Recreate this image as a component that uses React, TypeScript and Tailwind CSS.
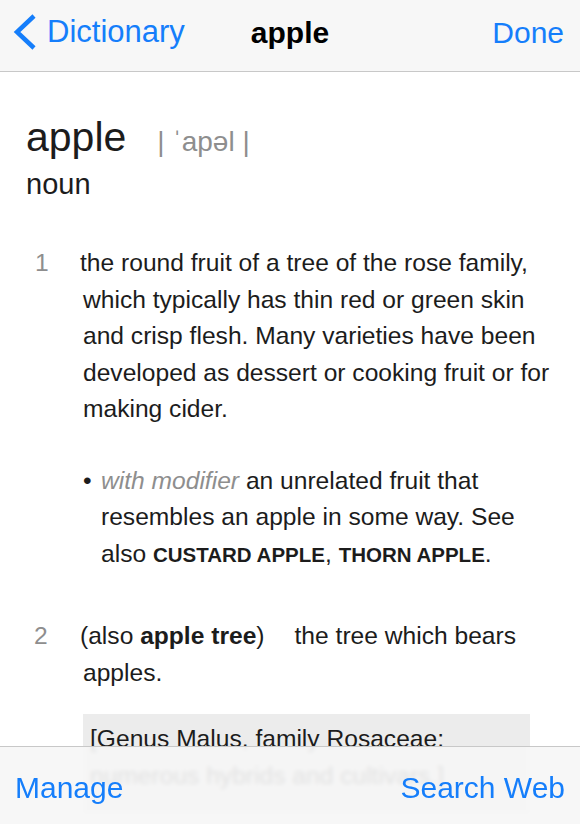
import React from 'react';

const font = { fontFamily: '"Liberation Sans", Arial, sans-serif' };

function BackChevron() {
    return (
        <svg width="24" height="38" viewBox="0 0 24 38" className="shrink-0">
            <path d="M21 3 L4 19 L21 35" fill="none" stroke="#157efb" strokeWidth="4.5" strokeLinejoin="miter" />
        </svg>
    );
}

export default function App() {
    return (
        <div className="relative h-[824px] w-[580px] overflow-hidden bg-white text-[#1c1c1c]" style={font}>
            {/* Navigation bar */}
            <header className="grid h-[72px] grid-cols-[1fr_auto_1fr] items-center border-b border-[#c8c8c8] bg-[#f7f7f7] pb-[7px]">
                <div className="flex items-center gap-[10px] pl-[13px] text-[31px] text-[#157efb]">
                    <BackChevron />
                    <span>Dictionary</span>
                </div>
                <div className="text-[30px] font-bold text-black">apple</div>
                <div className="pr-[16px] text-right text-[30px] text-[#157efb]">Done</div>
            </header>

            {/* Entry */}
            <main className="pt-[41px]">
                <div className="flex items-baseline pl-[26px] leading-[48px]">
                    <span className="text-[41px]">apple</span>
                    <span className="ml-[31px] text-[28px] text-[#8e8e8e]">| ˈapəl |</span>
                </div>
                <div className="pl-[26px] text-[29px] leading-[36px]">noun</div>

                <div className="mt-[43px] text-[24.6px] leading-[36.5px]">
                    <div className="flex">
                        <div className="w-[83px] shrink-0 pl-[35px] text-[#8e8e8e]">1</div>
                        <div className="pr-[20px] -indent-[3px]">
                            the round fruit of a tree of the rose family, which typically has thin red or green skin and crisp flesh. Many varieties have been developed as dessert or cooking fruit or for making cider.
                        </div>
                    </div>

                    <div className="mt-[35px] flex pl-[83px] pr-[20px]">
                        <div className="w-[18px] shrink-0">•</div>
                        <div>
                            <span className="italic text-[#8e8e8e]">with modifier</span> an unrelated fruit that resembles an apple in some way. See also{' '}
                            <span className="text-[20.5px] font-bold">CUSTARD APPLE</span>,{' '}
                            <span className="text-[20.5px] font-bold">THORN APPLE</span>.
                        </div>
                    </div>

                    <div className="mt-[45px] flex">
                        <div className="w-[83px] shrink-0 pl-[34px] text-[#8e8e8e]">2</div>
                        <div className="pr-[20px] -indent-[3px]">
                            (also <span className="font-bold">apple tree</span>)<span className="inline-block w-[30px]" />the tree which bears apples.
                        </div>
                    </div>

                    <div className="ml-[83px] mr-[50px] mt-[23px] bg-[#ececec] px-[7px] pt-[7px] pb-[20px]">
                        [Genus Malus, family Rosaceae: numerous hybrids and cultivars.]
                    </div>
                </div>
            </main>

            {/* Bottom toolbar, sits over the scrolling text */}
            <footer className="absolute inset-x-0 bottom-0 flex h-[78px] items-center justify-between border-t border-[#c8c8c8] bg-[#f6f6f6]/90 px-[15px] pt-[3px] text-[30px] text-[#157efb] backdrop-blur-[2px]">
                <span>Manage</span>
                <span>Search Web</span>
            </footer>
        </div>
    );
}
